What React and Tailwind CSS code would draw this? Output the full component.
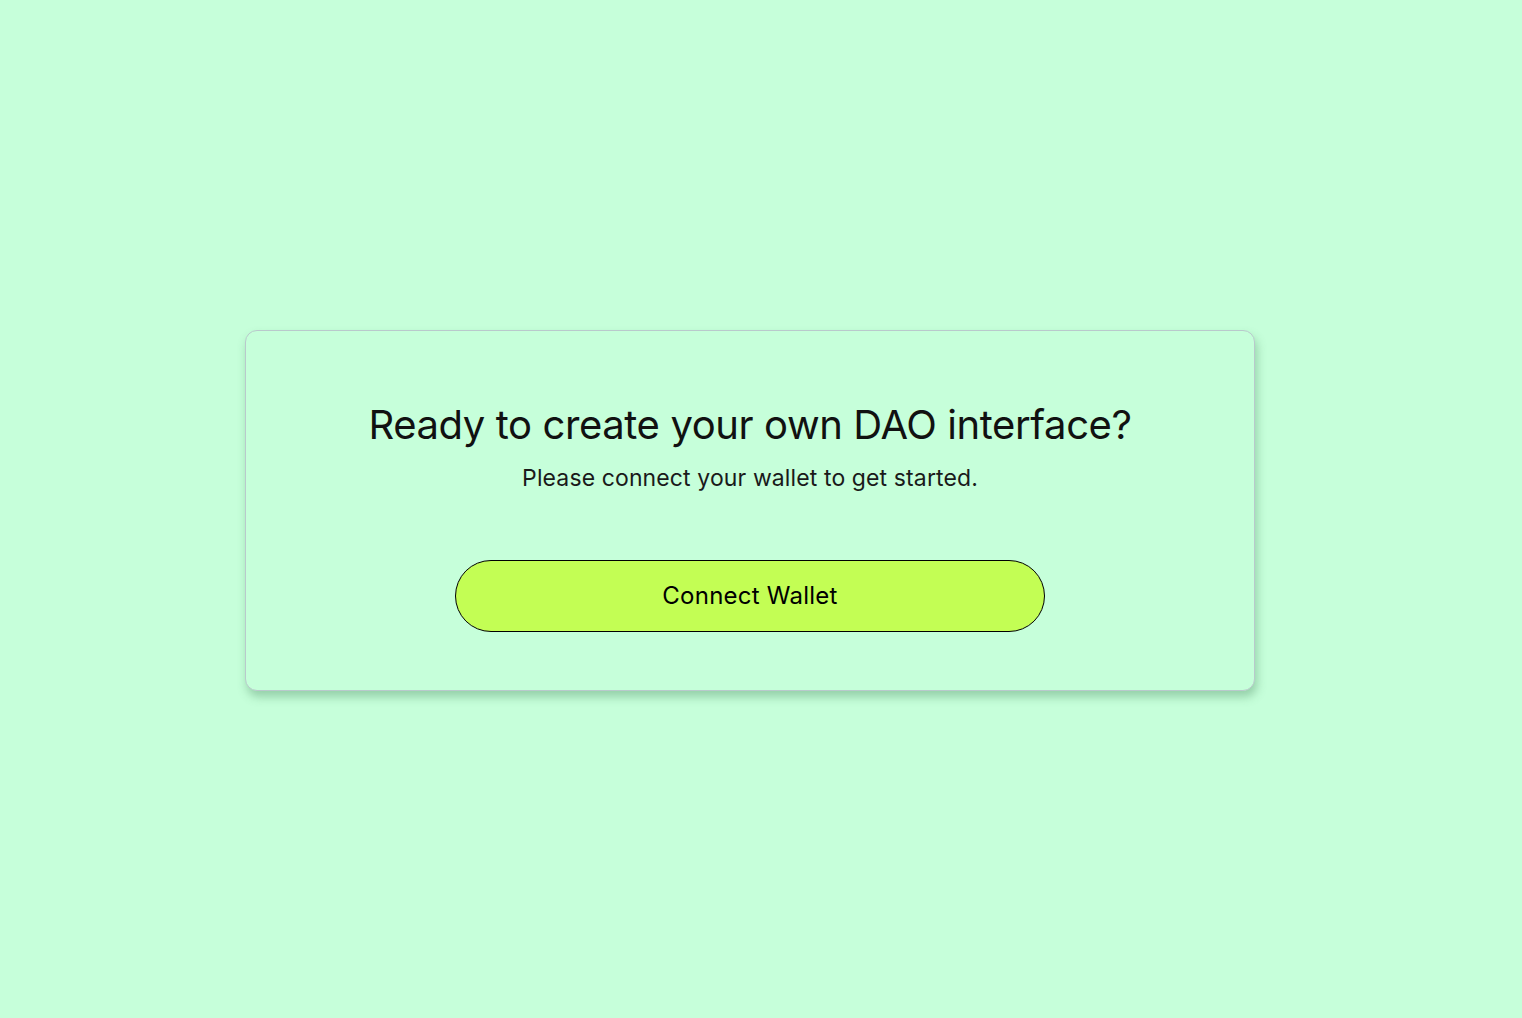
import React from "react";

function App() {
  return (
    <main
      className="min-h-screen w-full bg-[#c6ffda] flex items-center justify-center pr-[22px] pt-[2px]"
      style={{ fontFamily: "Inter, 'Noto Sans', sans-serif" }}
    >
      <section className="w-[1010px] h-[361px] rounded-xl border border-[#b9c9cc] bg-[#c6ffda] shadow-[2px_6px_10px_rgba(60,120,80,0.35)] flex flex-col items-center pt-[70px]">
        <h1 className="text-[40px] leading-[48px] font-normal tracking-[-0.01em] text-[#111]">
          Ready to create your own DAO interface?
        </h1>
        <p className="mt-[14px] text-[23px] leading-[30px] font-normal tracking-[0.005em] text-[#1a1a1a]">
          Please connect your wallet to get started.
        </p>
        <button
          type="button"
          className="mt-[67px] w-[590px] h-[72px] rounded-full border border-black bg-[#c3fe54] text-[24px] font-normal tracking-[0.01em] text-black"
        >
          Connect Wallet
        </button>
      </section>
    </main>
  );
}

export default App;
